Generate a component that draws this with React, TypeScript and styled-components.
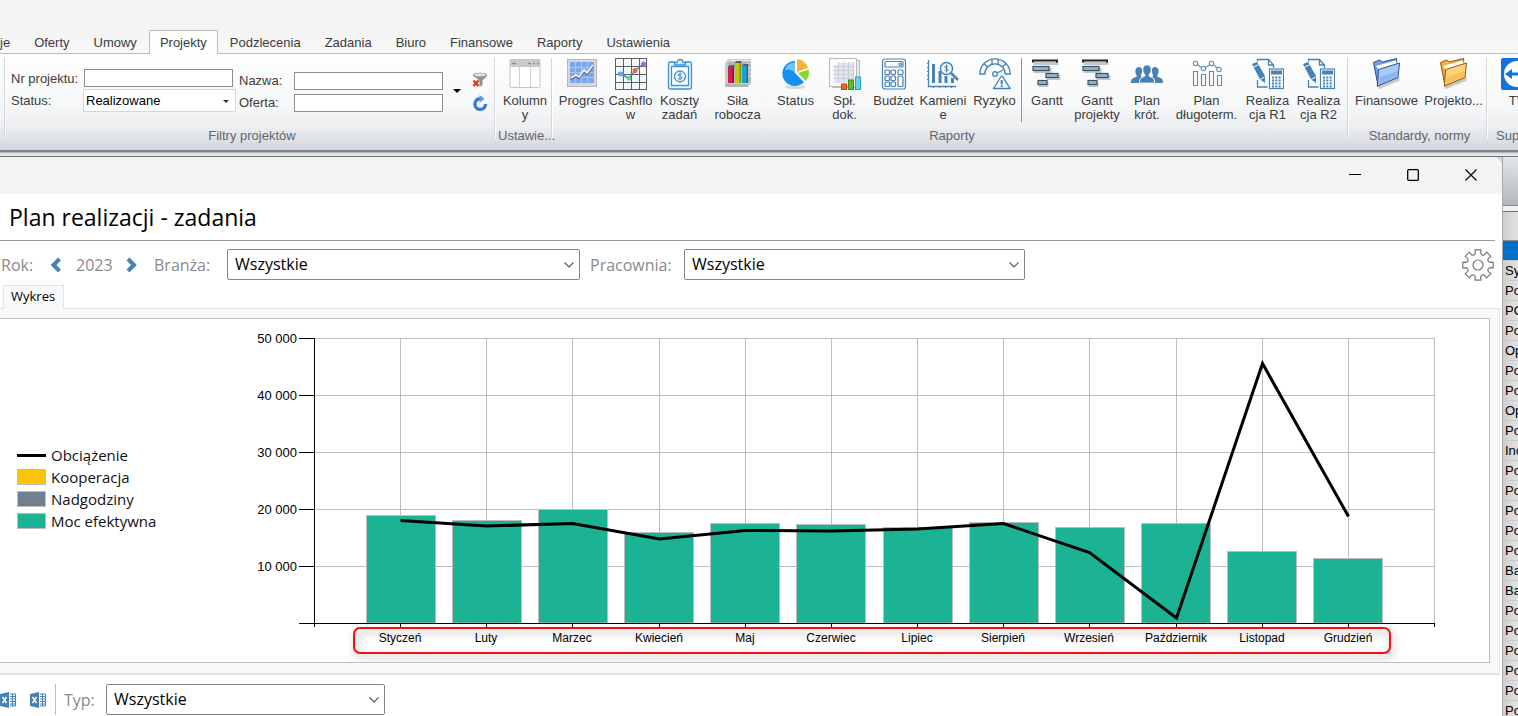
import React from "react";
import styled, { createGlobalStyle } from "styled-components";

const UI = `"Liberation Sans", Arial, sans-serif`;
const HUMAN = `"Open Sans", "Noto Sans", sans-serif`;
const BLUE = "#4682b4";

const GlobalStyle = createGlobalStyle`
  *, *::before, *::after { box-sizing: border-box; }
  body { margin: 0; background: #f0f0f0; font-family: ${UI}; font-size: 13px; color: #3c3c3c; }
  button, input, select { font: inherit; color: inherit; }
  button { padding: 0; border: 0; background: none; }
  svg { display: block; }
`;

const Shell = styled.div`
  display: flex;
  flex-direction: column;
  height: 100vh;
  overflow: hidden;
`;

/* ---------- ribbon ---------- */

const TabStrip = styled.nav`
  display: flex;
  flex: none;
  align-items: flex-end;
  height: 54px;
  background: linear-gradient(#f3f3f3, #f3f3f3 50%, #f9f9f9);
  box-shadow: inset 0 -1px #b9bbbe;
`;

const RibbonTab = styled.button<{ $active?: boolean; $cut?: boolean }>`
  height: 24px;
  padding: 0 ${(p) => (p.$active ? 10 : 11)}px;
  padding-left: ${(p) => (p.$cut ? 0 : p.$active ? 10 : 11)}px;
  white-space: nowrap;
  border: 1px solid ${(p) => (p.$active ? "#b9bbbe" : "transparent")};
  border-width: ${(p) => (p.$cut ? "1px 1px 0 0" : "1px 1px 0")};
  border-radius: 2px 2px 0 0;
  background: ${(p) => (p.$active ? "#fdfdfd" : "transparent")};
`;

const Ribbon = styled.div`
  display: flex;
  flex: none;
  height: 103px;
  padding: 4px 0 0 4px;
  border-bottom: 1px solid #747474;
  background:
    linear-gradient(#808388, #808388 2px, #b4b5b7 2px, #b4b5b7 3px, #dcdcdc 3px, #ececec) bottom / 100% 6px no-repeat,
    linear-gradient(#fefefe, #f6f7f8 50%, #eceef0 72%, #d2d6db 94%);
`;

const RibbonGroup = styled.section<{ $w: number }>`
  display: flex;
  flex: none;
  flex-direction: column;
  justify-content: space-between;
  width: ${(p) => p.$w}px;
  height: 85px;
  background:
    linear-gradient(#d3d6da, #d3d6da) left top / 1px 80px no-repeat,
    linear-gradient(#fff, #fff) 1px 0 / 1px 80px no-repeat;
`;

const GroupBody = styled.div<{ $pad?: number }>`
  display: flex;
  padding-left: ${(p) => p.$pad ?? 0}px;
`;

const GroupTitle = styled.div<{ $left?: number }>`
  padding-left: ${(p) => p.$left ?? 6}px;
  text-align: ${(p) => (p.$left ? "left" : "center")};
  line-height: 14px;
  white-space: nowrap;
  color: #5f6672;
`;

const ToolButton = styled.button<{ $w: number }>`
  display: flex;
  flex: none;
  flex-direction: column;
  align-items: center;
  gap: 4px;
  width: ${(p) => p.$w}px;
  line-height: 14px;
  white-space: pre;
  text-align: center;
`;

const ToolDivider = styled.span`
  flex: none;
  width: 1px;
  height: 64px;
  background: #8f9297;
`;

const FilterFields = styled.div`
  display: grid;
  grid-template-columns: 73px 155px 55px 149px;
  padding: 11px 0 0 7px;
`;

const FieldLabel = styled.label<{ $low?: boolean }>`
  height: 22px;
  padding-top: ${(p) => (p.$low ? 4 : 2)}px;
  line-height: 15px;
`;

const TextField = styled.input<{ $low?: boolean }>`
  width: 149px;
  height: 18px;
  margin-top: ${(p) => (p.$low ? 3 : 0)}px;
  padding: 0 2px;
  border: 1px solid #8b8d96;
  background: #fff;
`;

const StatusWrap = styled.span`
  position: relative;
  width: 153px;
  height: 23px;
  margin-left: -1px;
  margin-top: -2px;
  svg { position: absolute; right: 7px; top: 11px; pointer-events: none; }
`;

const StatusSelect = styled.select`
  appearance: none;
  width: 100%;
  height: 23px;
  padding: 0 2px 1px;
  border: 1px solid #d5d7da;
  border-radius: 0;
  background: #fff;
  color: #000;
`;

const SideTools = styled.div`
  display: flex;
  align-items: center;
  gap: 11px;
  padding: 11px 0 0 10px;
`;

const SideStack = styled.div`
  display: flex;
  flex-direction: column;
  gap: 7px;
`;

/* ---------- window ---------- */

const Desk = styled.div`
  display: grid;
  flex: 1;
  grid-template-columns: minmax(0, 1fr) 16px;
  min-height: 0;
  background: #d3d6da;
`;

const Window = styled.main`
  display: flex;
  flex-direction: column;
  min-width: 0;
  border-radius: 0 9px 0 0;
  background: #fff;
  overflow: hidden;
`;

const Caption = styled.header`
  display: flex;
  flex: none;
  justify-content: flex-end;
  height: 37px;
  padding-right: 2px;
  background: #f1f4f3;
`;

const CaptionButton = styled.button`
  display: grid;
  place-items: center;
  width: 58px;
  height: 36px;
`;

const Heading = styled.h1`
  flex: none;
  height: 47px;
  margin: 0 7px 0 0;
  padding-left: 9px;
  border-bottom: 1px solid #9b9b9b;
  font: 400 23px/46px ${HUMAN};
  color: #000;
`;

const Bar = styled.div`
  display: flex;
  flex: none;
  align-items: center;
  font: 400 16px/24px ${HUMAN};
  color: #8a8a8a;
`;

const CriteriaBar = styled(Bar)`
  height: 31px;
  margin: 8px 8px 0 0;
  padding-left: 1px;
`;

const BarText = styled.span<{ $w: number }>`
  flex: none;
  width: ${(p) => p.$w}px;
`;

const BarLabel = styled.label<{ $w: number }>`
  flex: none;
  width: ${(p) => p.$w}px;
`;

const IconButton = styled.button<{ $push?: boolean; $w?: number }>`
  display: flex;
  width: ${(p) => (p.$w ? `${p.$w}px` : "auto")};
  margin-left: ${(p) => (p.$push ? "auto" : 0)};
`;

const ComboWrap = styled.span<{ $w: number; $gap?: number }>`
  position: relative;
  flex: none;
  width: ${(p) => p.$w}px;
  margin-right: ${(p) => p.$gap ?? 0}px;
  svg { position: absolute; right: 6px; top: 13px; pointer-events: none; }
`;

const Combo = styled.select`
  appearance: none;
  display: block;
  width: 100%;
  height: 31px;
  padding: 0 24px 2px 7px;
  border: 1px solid #858585;
  border-radius: 2px;
  background: #fff;
  color: #000;
`;

const PageTabs = styled.div`
  display: flex;
  flex: none;
  height: 24px;
  margin: 5px 2px 0 0;
  padding-left: 3px;
  box-shadow: inset 0 -1px #e3e3e3;
`;

const PageTab = styled.button`
  height: 24px;
  padding: 0 8px 3px 7px;
  border: 1px solid #e3e3e3;
  border-bottom: 0;
  background: #f9f9f9;
  font: 400 13px/20px ${HUMAN};
  color: #000;
`;

const PagePanel = styled.section`
  flex: none;
  margin-right: 2px;
  padding: 9px 9px 10px 0;
  border: solid #e3e3e3;
  border-width: 0 1px 2px 0;
  background: #f9f9f9;
`;

const ChartBox = styled.div`
  display: flex;
  align-items: center;
  border: solid #bdbdbd;
  border-width: 1px 1px 1px 0;
  background: #fff;
`;

const Legend = styled.ul`
  flex: none;
  width: 240px;
  margin: 0;
  padding: 0 0 5px 17px;
  list-style: none;
  font: 400 15px/22px ${HUMAN};
  color: #111;
`;

const LegendItem = styled.li`
  display: flex;
  align-items: center;
  gap: 5px;
`;

const Swatch = styled.span<{ $color: string; $line?: boolean }>`
  width: 29px;
  height: ${(p) => (p.$line ? 3 : 16)}px;
  border: ${(p) => (p.$line ? "0" : "1px solid #bdbdbd")};
  background: ${(p) => p.$color};
`;

const ChartSvg = styled.svg`
  flex: 1;
  min-width: 0;
  font-family: ${UI};
`;

const ExportBar = styled(Bar)`
  height: 31px;
  margin-top: 9px;
`;

const BarDivider = styled.span`
  width: 1px;
  height: 31px;
  margin: 0 8px 0 9px;
  background: #bdbdbd;
`;

/* ---------- list behind the window ---------- */

const BackList = styled.aside`
  display: flex;
  flex-direction: column;
  border-left: 1px solid #a9a9a9;
  background: linear-gradient(90deg, #cfcfcf, #e2e2e2);
  color: #000;
  overflow: hidden;
`;

const BackToolbar = styled.div`
  flex: none;
  height: 49px;
  border-bottom: 1px solid #85888c;
  background: linear-gradient(#e3e5e8, #b3b7bd);
`;

const BackHeader = styled.div`
  flex: none;
  height: 35px;
  border-top: 5px solid #f2f2f2;
  border-bottom: 1px solid #8c8c8c;
  box-shadow: inset 0 1px #6f6f6f;
`;

const BackRow = styled.div<{ $selected?: boolean }>`
  flex: none;
  height: 20px;
  padding-left: 2px;
  border-bottom: 1px solid #cacaca;
  background: ${(p) => (p.$selected ? "#0070c9" : "none")};
  line-height: 20px;
  white-space: nowrap;
`;

/* ---------- icons ---------- */

const Ico = ({ children, size = 32 }: { children: React.ReactNode; size?: number }) => (
  <svg width={size} height={size} viewBox={`0 0 ${size} ${size}`} fill="none" aria-hidden="true">
    {children}
  </svg>
);

const ColumnsIcon = () => (
  <Ico>
    <rect x="1" y="1.500" width="30" height="28" rx="1" fill="#fff" stroke="#c3c5c8" />
    <rect x="1" y="2" width="30" height="7" fill="#c9cacc" />
    <path d="M3 5.500h4M19 5.500h3M24 5.500h2M28 5.500h2" stroke="#8d8f92" strokeWidth="1.500" />
    <path d="M10.500 9v20M21.500 9v20" stroke="#cfd1d4" />
  </Ico>
);

const ProgressIcon = () => (
  <Ico>
    <rect x="1.500" y="1.500" width="29" height="27" fill="#d5d7d9" stroke="#b5b7ba" />
    <rect x="4" y="4" width="24" height="21" fill="#7ea7ea" />
    <path d="M4 9.500h24M4 14.500h24M4 19.500h24M9.500 4v21M15.500 4v21M21.500 4v21" stroke="#a9c6f3" />
    <path d="M5 21l5-3 3 2 5-7 3 3 6-8" stroke="#4c5d7a" strokeWidth="2.200" />
    <path d="M5 20l5-3 3 2 5-7 3 3 6-8" stroke="#f1f1ee" strokeWidth="1.800" />
  </Ico>
);

const CashflowIcon = () => (
  <Ico>
    <rect width="32" height="32" fill="#f2f7fb" />
    <path d="M.5 0v32M8.500 0v32M16.500 0v32M24.500 0v32M31.500 0v32M0 .5h32M0 8.500h32M0 16.500h32M0 24.500h32M0 31.500h32" stroke="#5b5f63" />
    <path d="M3 15l3 1 8 4.500 6-8 9-7" stroke="#3f86c8" strokeWidth="1.500" />
    <circle cx="6" cy="16" r="2.500" fill="#6ea3e6" />
    <circle cx="14" cy="20.500" r="2.300" fill="#6fd07a" />
    <circle cx="20" cy="12.500" r="2.500" fill="#f0643c" />
    <circle cx="28.500" cy="6" r="2.500" fill="#b55fd0" />
  </Ico>
);

const ClipboardIcon = () => (
  <Ico>
    <g stroke="#3f93cf" strokeWidth="1.300">
      <path d="M11 4H6a1.500 1.500 0 0 0-1.500 1.500v24A1.500 1.500 0 0 0 6 31h20a1.500 1.500 0 0 0 1.500-1.500v-24A1.500 1.500 0 0 0 26 4h-5" fill="#eaf5fc" />
      <path d="M7.500 8.500h17v19h-17z" fill="#fff" />
      <path d="M10.500 7V4.500H13a3 3 0 0 1 6 0h2.500V7z" fill="#d7ecf9" />
      <circle cx="16" cy="18.500" r="5.500" fill="#eaf5fc" />
      <path d="M18 16.500c-.5-1-3.800-1.200-3.800.4 0 1.800 3.800.9 3.800 2.900 0 1.700-3.500 1.500-4 .2M16 14.500v8" strokeWidth="1" />
    </g>
  </Ico>
);

const BooksIcon = () => (
  <Ico>
    <path d="M3 5l3-4h23v24l-3 4H3z" fill="#c9cbcd" />
    <path d="M6 4h23v20H8z" fill="#b1b4b7" />
    <path d="M8 2.500h21M24 6h5M24 10h5M24 14h5M24 18h5" stroke="#e6e7e8" />
    <rect x="6" y="9" width="6" height="16" fill="#d31f49" />
    <rect x="13" y="5" width="6" height="20" fill="#c3c80d" />
    <rect x="20" y="8" width="6" height="17" fill="#16a2d4" />
    <path d="M5.500 9l2-2h5v2zM12.500 5l2-2h5v2zM19.500 8l2-2h5.500l-1 2z" fill="#5c5f63" />
    <path d="M10.500 9h1.500v16h-1.500z" fill="#93102f" />
    <path d="M17.500 5H19v20h-1.500z" fill="#8b9006" />
    <path d="M24.500 8H26v17h-1.500z" fill="#0d6f95" />
    <path d="M3 26h24l-2 3H3z" fill="#b3b5b8" />
  </Ico>
);

const PieIcon = () => (
  <Ico>
    <ellipse cx="15" cy="29" rx="10" ry="2" fill="#d6d9dc" />
    <path d="M15 3a12.500 12.500 0 1 0 9 21L15 15z" fill="#1590ec" />
    <path d="M15 4.500A10 10 0 0 0 5 12c5-1 8 0 10 3z" fill="#71c4fa" />
    <path d="M17 1a12 12 0 0 1 11 9l-11 4z" fill="#f7b538" />
    <path d="M18 15l10.500-3.500A12 12 0 0 1 25.500 23z" fill="#8bd62c" />
  </Ico>
);

const SheetIcon = () => (
  <Ico>
    <path d="M3.500 2.500h27v27h-27z" fill="#e9eaec" stroke="#b6b8bb" />
    <path d="M.5.5h27v28H.5z" fill="#fafafb" stroke="#b6b8bb" />
    <path d="M5 7h5v18H5zM10 5h14v20H10z" fill="#e2e5ef" />
    <path d="M4.500 8.500h20M4.500 12.500h20M4.500 16.500h20M4.500 20.500h20M9.500 4v21M14.500 4v21M19.500 4v21M24.500 4v21" stroke="#c9cedb" />
    <rect x="12.500" y="26" width="5" height="5.500" fill="#f26522" stroke="#c8430e" />
    <rect x="19.500" y="22" width="5" height="9.500" fill="#63b832" stroke="#3c8a18" />
    <rect x="26.500" y="19" width="5" height="12.500" fill="#5fd3e8" stroke="#25a7c0" />
  </Ico>
);

const CalculatorIcon = () => (
  <Ico>
    <g stroke={BLUE} strokeWidth="1.200">
      <rect x="4.500" y="1" width="23" height="30" rx="2.500" />
      <rect x="7" y="3.500" width="18" height="5.500" rx="1" />
      <rect x="21" y="5" width="2.500" height="2.500" rx="1" />
      {[12, 18, 24].map((y) =>
        [7, 13].map((x) => <rect key={`${x}-${y}`} x={x} y={y} width="4.500" height="4.500" rx="1" />)
      )}
      <rect x="20" y="12" width="5" height="4.500" rx="1" />
      <rect x="20" y="18" width="5" height="10.500" rx="1" />
    </g>
  </Ico>
);

const MilestoneIcon = () => (
  <Ico>
    <path d="M1.500 2v26.500H29" stroke={BLUE} strokeWidth="1.300" />
    <path d="M0 5.500h2M0 9.500h2M0 13.500h2M0 17.500h2M0 21.500h2M6.500 28v2M12.500 28v2M18.500 28v2M24.500 28v2" stroke={BLUE} />
    <path d="M6.500 6v19M13 13v12M19 18v7M25.500 20v5" stroke={BLUE} strokeWidth="3" />
    <circle cx="19.500" cy="10.500" r="6" fill="#f8fbfd" stroke={BLUE} strokeWidth="1.500" />
    <path d="M24 15l7 7" stroke={BLUE} strokeWidth="2.500" />
    <path d="M21.300 8.500c-.6-1-3.500-1-3.500.5 0 1.600 3.500.9 3.500 2.700 0 1.500-3.100 1.300-3.700.3M19.500 6.500v8" stroke={BLUE} />
  </Ico>
);

const RiskIcon = () => (
  <Ico>
    <g stroke={BLUE} strokeWidth="1.300">
      <path d="M.8 16a15.200 15.200 0 0 1 30.400 0h-5a10.200 10.200 0 0 0-20.400 0z" />
      <path d="M5 5.500l3.800 3.700M13 1.500v5M19 1.500v5M27 5.500l-3.800 3.700" />
      <circle cx="16" cy="16" r="2.300" />
      <path d="M18 15l6-3" />
      <path d="M22 18.500l-7.500 12h16.500l-7.500-12a1 1 0 0 0-1.500 0z" fill="#f8fbfd" />
      <path d="M22.700 22v4.500M22.700 27.500v1.500" strokeWidth="2" />
    </g>
  </Ico>
);

const GanttIcon = () => (
  <Ico>
    <g transform="translate(1.500 2)" fill="#c3c6ca">
      <path d="M1 2h25v3H1zM1 8h18v5H1zM14 15h14v5H14zM6 22h10v5H6z" />
    </g>
    <path d="M2 4.500V2.500h24V4.500" stroke="#222" strokeWidth="2" />
    <g fill="#8db8d2" stroke="#3d525f" strokeWidth="1.200">
      <rect x="2" y="8.500" width="16" height="4" />
      <rect x="15" y="15.500" width="12" height="4" />
      <rect x="7" y="22.500" width="9" height="4" />
    </g>
  </Ico>
);

const PeopleIcon = () => (
  <Ico>
    <g fill={BLUE}>
      <path d="M0 25c0-4 1-4.500 5-6 1.200-.5 1-1.500.3-2.300C4 15 3.600 9 7.800 9c3.500 0 3.800 3.500 3 6-.8 2-1.200 3-.2 4C8.500 20.500 8 22 8 25z" />
      <path d="M32 25c0-4-1-4.500-5-6-1.200-.5-1-1.500-.3-2.300C28 15 28.400 9 24.200 9c-3.500 0-3.800 3.500-3 6 .8 2 1.200 3 .2 4 2.100 1.500 2.600 3 2.600 6z" />
      <path d="M8.500 25c0-4.500 1-5 4.700-6.400 1-.4 1-1.600.2-2.600C11 13 11 7 16 7s5 6 2.600 9c-.8 1-.8 2.200.2 2.600 3.700 1.400 4.700 1.900 4.700 6.400z" stroke="#f8f9fa" strokeWidth=".8" />
    </g>
  </Ico>
);

const BarsTrendIcon = () => (
  <Ico>
    <g stroke="#5d8fba" strokeWidth="1.100">
      <path d="M2.500 13.500h4v14h-4zM10.500 16.500h4v11h-4zM18.500 13.500h4v14h-4zM26.500 17.500h4v10h-4z" />
      <circle cx="4.500" cy="5.500" r="2.200" />
      <circle cx="12.500" cy="10.500" r="2.200" />
      <circle cx="20.500" cy="5.500" r="2.200" />
      <circle cx="28" cy="11.500" r="2.200" />
      <path d="M6.500 7l4 2.500M14.500 9.500l4-2.500M22.500 7l4 3" />
    </g>
  </Ico>
);

const EstimateIcon = () => (
  <Ico>
    <path d="M5.500 3.500V1.500h11l5 5.500v3M16.500 1.500V7h5M5.500 22v7h10" stroke={BLUE} strokeWidth="1.300" />
    <path d="M0 6l5-2 8 14v7l-5-3.500z" fill={BLUE} />
    <path d="M1.500 9l5-2.200M8 21.500l4.500-2.500" stroke="#fff" />
    <rect x="17.500" y="11" width="14" height="19.500" fill="#fff" stroke={BLUE} strokeWidth="1.200" />
    <rect x="19" y="12.500" width="11" height="4" fill={BLUE} />
    <path d="M20 19.500h10M20 22.500h10M20 25.500h10M20 28.500h10" stroke={BLUE} strokeWidth="2" strokeDasharray="2 1.300" />
  </Ico>
);

const FolderIcon = ({ light, main, dark }: { light: string; main: string; dark: string }) => (
  <Ico>
    <path d="M5 28l24-9-1 4L8 31z" fill="#c6c8cb" />
    <path d="M2.500 4.500l6-2.500 3 2 14-3.500 1 17L7 27.500z" fill={main} stroke={dark} />
    <path d="M5 8L25 2.500l1 4.500L8 12z" fill="#fff" />
    <path d="M6.500 28l1-16.500L28.500 5l-1.500 14.500z" fill={light} stroke={dark} />
    <path d="M8 26l1-7 18-6-.8 6z" fill={main} opacity=".5" />
  </Ico>
);

const RemoteIcon = () => (
  <Ico>
    <rect width="32" height="32" rx="2" fill="#0f74dc" />
    <circle cx="16" cy="16" r="13" fill="#fff" />
    <path d="M4 16l7-5v3.500h10V11l7 5-7 5v-3.500H11V21z" fill="#0f74dc" />
  </Ico>
);

const ClearFilterIcon = () => (
  <Ico size={16}>
    <path d="M1 3c0-3 14-3 14 0 0 2-4 4-4.500 6v4l-3 2V9C7 7 1 5 1 3z" fill="#8f9193" />
    <ellipse cx="8" cy="2.800" rx="5.500" ry="1.500" fill="#e5e5e5" />
    <path d="M1.500 8.500l5 5.500M6.500 8.500l-5 5.500" stroke="#e03c12" strokeWidth="2.400" />
  </Ico>
);

const RefreshIcon = () => (
  <Ico size={16}>
    <path d="M13.500 9A5.300 5.300 0 1 1 8 3.800" stroke="#3a7bd0" strokeWidth="3.400" />
    <path d="M7.500 0l5 3.800-5 4z" fill="#5b97e0" />
  </Ico>
);

const ChevronIcon = ({ flip }: { flip?: boolean }) => (
  <svg width="12" height="16" viewBox="0 0 12 16" fill="none" aria-hidden="true">
    <path d={flip ? "M2 2l6 6-6 6" : "M9.500 2l-6 6 6 6"} stroke={BLUE} strokeWidth="4" />
  </svg>
);

const DownIcon = () => (
  <svg width="10" height="6" viewBox="0 0 10 6" fill="none" aria-hidden="true">
    <path d="M.5.5L5 5 9.500.5" stroke="#555" strokeWidth="1.100" />
  </svg>
);

const SmallArrow = ({ w, color }: { w: number; color: string }) => (
  <svg width={w} height={w / 2} viewBox="0 0 8 4" aria-hidden="true">
    <path d="M0 0h8L4 4z" fill={color} />
  </svg>
);

const teeth = 8;
const gearPath = (() => {
  const point = (r: number, deg: number) => {
    const a = (deg * Math.PI) / 180;
    return `${(16 + r * Math.sin(a)).toFixed(2)} ${(16 - r * Math.cos(a)).toFixed(2)}`;
  };
  let d = "";
  for (let i = 0; i < teeth; i++) {
    const c = (i * 360) / teeth;
    d += `${i ? "L" : "M"}${point(12, c - 13)}L${point(15.5, c - 11)}L${point(15.5, c + 11)}L${point(12, c + 13)}`;
    d += `Q${point(10, c + 22.5)} ${point(12, c + 32)}`;
  }
  return `${d}Z`;
})();

const GearIcon = () => (
  <Ico>
    <path d={gearPath} stroke="#777" strokeLinejoin="round" strokeWidth="1.200" />
    <circle cx="16" cy="16" r="5" stroke="#777" strokeWidth="1.200" />
  </Ico>
);

const ExcelIcon = () => (
  <Ico size={16}>
    <path d="M0 2l9-2v16l-9-2z" fill={BLUE} />
    <path d="M10 2h5.500v12H10M10 4.500h5M10 7h5M10 9.500h5M10 12h5M12.500 2v12" stroke={BLUE} />
    <path d="M2.500 5l4 6M6.500 5l-4 6" stroke="#fff" strokeWidth="1.500" />
  </Ico>
);

/* ---------- data ---------- */

type Tool = { label: string; w: number; icon: React.ReactNode };

const tabs = ["Oferty", "Umowy", "Projekty", "Podzlecenia", "Zadania", "Biuro", "Finansowe", "Raporty", "Ustawienia"];

const reports: Tool[] = [
  { label: "Progres", w: 49, icon: <ProgressIcon /> },
  { label: "Cashflo\nw", w: 49, icon: <CashflowIcon /> },
  { label: "Koszty\nzadań", w: 49, icon: <ClipboardIcon /> },
  { label: "Siła\nrobocza", w: 67, icon: <BooksIcon /> },
  { label: "Status", w: 49, icon: <PieIcon /> },
  { label: "Spł.\ndok.", w: 49, icon: <SheetIcon /> },
  { label: "Budżet", w: 49, icon: <CalculatorIcon /> },
  { label: "Kamieni\ne", w: 50, icon: <MilestoneIcon /> },
  { label: "Ryzyko", w: 53, icon: <RiskIcon /> },
];

const plans: Tool[] = [
  { label: "Gantt", w: 50, icon: <GanttIcon /> },
  { label: "Gantt\nprojekty", w: 50, icon: <GanttIcon /> },
  { label: "Plan\nkrót.", w: 50, icon: <PeopleIcon /> },
  { label: "Plan\ndługoterm.", w: 69, icon: <BarsTrendIcon /> },
  { label: "Realiza\ncja R1", w: 53, icon: <EstimateIcon /> },
  { label: "Realiza\ncja R2", w: 49, icon: <EstimateIcon /> },
];

const standards: Tool[] = [
  { label: "Finansowe", w: 67, icon: <FolderIcon light="#a9cbf8" main="#6da2ee" dark="#2e4f86" /> },
  { label: "Projekto...", w: 67, icon: <FolderIcon light="#ffd27a" main="#f9ae33" dark="#8a5a14" /> },
];

const legend = [
  { name: "Obciążenie", color: "#000", line: true },
  { name: "Kooperacja", color: "#fbc408" },
  { name: "Nadgodziny", color: "#708090" },
  { name: "Moc efektywna", color: "#1bb394" },
];

const months = [
  { name: "Styczeń", power: 18860, load: 18070 },
  { name: "Luty", power: 17980, load: 17100 },
  { name: "Marzec", power: 19910, load: 17540 },
  { name: "Kwiecień", power: 15880, load: 14820 },
  { name: "Maj", power: 17450, load: 16320 },
  { name: "Czerwiec", power: 17280, load: 16230 },
  { name: "Lipiec", power: 16840, load: 16580 },
  { name: "Sierpień", power: 17630, load: 17540 },
  { name: "Wrzesień", power: 16750, load: 12460 },
  { name: "Październik", power: 17450, load: 965 },
  { name: "Listopad", power: 12540, load: 45610 },
  { name: "Grudzień", power: 11320, load: 18770 },
];

const backRows = "Sy,Po,PO,Po,Op,Po,Po,Op,Po,Inc,Po,Po,Po,Po,Po,Ba,Ba,Po,Po,Po,Po,Po,Po".split(",");

/* ---------- chart ---------- */

const plot = { left: 74, top: 19, width: 1120, height: 285, max: 50000 };
const bottom = plot.top + plot.height;
const right = plot.left + plot.width;
const yOf = (v: number) => bottom - (v / plot.max) * plot.height;
const xOf = (i: number) => plot.left + ((i + 1) * plot.width) / (months.length + 1);
const snap = (n: number) => Math.floor(n) + 0.5;
const center = (i: number) => Math.round(xOf(i)) + 0.5;

const Chart = () => (
  <ChartSvg viewBox="0 0 1249 343" role="img" aria-label="Plan realizacji">
    <defs>
      <filter id="soft" x="-5%" y="-50%" width="110%" height="220%">
        <feDropShadow dx="2" dy="4" stdDeviation="4" floodOpacity=".4" />
      </filter>
    </defs>
    <g stroke="#bdbdbd">
      {[10000, 20000, 30000, 40000, 50000].map((v) => (
        <path key={v} d={`M${plot.left} ${snap(yOf(v))}H${right}`} />
      ))}
      {months.map((m, i) => (
        <path key={m.name} d={`M${center(i)} ${plot.top}V${bottom}`} />
      ))}
      <path d={`M${right + 0.5} ${plot.top}V${bottom}`} />
    </g>
    {months.map((m, i) => (
      <rect key={m.name} x={snap(xOf(i)) - 34} y={snap(yOf(m.power))} width="69" height={bottom - snap(yOf(m.power))} fill="#1bb394" stroke="#bdbdbd" />
    ))}
    <rect x="114" y="309" width="1036" height="25" rx="6" stroke="#fa0a0a" strokeWidth="2" fill="none" filter="url(#soft)" />
    <g stroke="#000">
      <path d={`M${plot.left + 0.5} ${plot.top}V${bottom + 4}M${plot.left - 15} ${bottom + 0.5}H${right + 1}M${right + 0.5} ${bottom}v4`} />
      {[10000, 20000, 30000, 40000, 50000].map((v) => (
        <path key={v} d={`M${plot.left - 15} ${snap(yOf(v))}h15`} />
      ))}
      {months.map((m, i) => (
        <path key={m.name} d={`M${center(i)} ${bottom}v4`} />
      ))}
    </g>
    <polyline points={months.map((m, i) => `${center(i)},${(yOf(m.load) + 0.5).toFixed(1)}`).join(" ")} fill="none" stroke="#000" strokeWidth="3" />
    <g fontSize="13" textAnchor="end" fill="#000">
      {[10, 20, 30, 40, 50].map((k) => (
        <text key={k} x={plot.left - 17} y={Math.floor(yOf(k * 1000)) + 5}>{`${k} 000`}</text>
      ))}
    </g>
    <g fontSize="12" textAnchor="middle" fill="#000">
      {months.map((m, i) => (
        <text key={m.name} x={center(i) - 0.5} y={bottom + 19}>{m.name}</text>
      ))}
    </g>
  </ChartSvg>
);

const Tools = ({ items }: { items: Tool[] }) => (
  <>
    {items.map((t) => (
      <ToolButton key={t.label} $w={t.w}>
        {t.icon}
        <span>{t.label}</span>
      </ToolButton>
    ))}
  </>
);

const ComboBox = ({ id, w, gap }: { id: string; w: number; gap?: number }) => (
  <ComboWrap $w={w} $gap={gap}>
    <Combo id={id}>
      <option>Wszystkie</option>
    </Combo>
    <DownIcon />
  </ComboWrap>
);

export default function App() {
  return (
    <Shell>
      <GlobalStyle />
      <TabStrip>
        <RibbonTab $cut>je</RibbonTab>
        {tabs.map((t) => (
          <RibbonTab key={t} $active={t === "Projekty"}>{t}</RibbonTab>
        ))}
      </TabStrip>

      <Ribbon>
        <RibbonGroup $w={490}>
          <GroupBody>
            <FilterFields>
              <FieldLabel htmlFor="number">Nr projektu:</FieldLabel>
              <TextField id="number" />
              <FieldLabel htmlFor="name" $low>Nazwa:</FieldLabel>
              <TextField id="name" $low />
              <FieldLabel htmlFor="status">Status:</FieldLabel>
              <StatusWrap>
                <StatusSelect id="status">
                  <option>Realizowane</option>
                </StatusSelect>
                <SmallArrow w={6} color="#333" />
              </StatusWrap>
              <FieldLabel htmlFor="offer" $low>Oferta:</FieldLabel>
              <TextField id="offer" $low />
            </FilterFields>
            <SideTools>
              <IconButton aria-label="Więcej"><SmallArrow w={8} color="#000" /></IconButton>
              <SideStack>
                <IconButton aria-label="Wyczyść filtr"><ClearFilterIcon /></IconButton>
                <IconButton aria-label="Odśwież"><RefreshIcon /></IconButton>
              </SideStack>
            </SideTools>
          </GroupBody>
          <GroupTitle>Filtry projektów</GroupTitle>
        </RibbonGroup>
        <RibbonGroup $w={57}>
          <GroupBody $pad={6}>
            <Tools items={[{ label: "Kolumn\ny", w: 50, icon: <ColumnsIcon /> }]} />
          </GroupBody>
          <GroupTitle $left={4}>Ustawie...</GroupTitle>
        </RibbonGroup>
        <RibbonGroup $w={796}>
          <GroupBody $pad={6}>
            <Tools items={reports} />
            <ToolDivider />
            <Tools items={plans} />
          </GroupBody>
          <GroupTitle>Raporty</GroupTitle>
        </RibbonGroup>
        <RibbonGroup $w={139}>
          <GroupBody $pad={6}>
            <Tools items={standards} />
          </GroupBody>
          <GroupTitle>Standardy, normy</GroupTitle>
        </RibbonGroup>
        <RibbonGroup $w={70}>
          <GroupBody $pad={6}>
            <Tools items={[{ label: "TV", w: 50, icon: <RemoteIcon /> }]} />
          </GroupBody>
          <GroupTitle $left={10}>Support</GroupTitle>
        </RibbonGroup>
      </Ribbon>

      <Desk>
        <Window>
          <Caption>
            <CaptionButton aria-label="Minimalizuj">
              <Ico size={12}><path d="M0 5.500h12" stroke="#000" /></Ico>
            </CaptionButton>
            <CaptionButton aria-label="Maksymalizuj">
              <Ico size={12}><rect x=".7" y=".7" width="10.600" height="10.600" rx="1" stroke="#000" strokeWidth="1.300" /></Ico>
            </CaptionButton>
            <CaptionButton aria-label="Zamknij">
              <Ico size={12}><path d="M.5.5l11 11M11.500.5l-11 11" stroke="#000" strokeWidth="1.200" /></Ico>
            </CaptionButton>
          </Caption>
          <Heading>Plan realizacji - zadania</Heading>

          <CriteriaBar>
            <BarText $w={49}>Rok:</BarText>
            <IconButton aria-label="Poprzedni rok" $w={26}><ChevronIcon /></IconButton>
            <BarText $w={50}>2023</BarText>
            <IconButton aria-label="Następny rok" $w={28}><ChevronIcon flip /></IconButton>
            <BarLabel htmlFor="branch" $w={73}>Branża:</BarLabel>
            <ComboBox id="branch" w={353} gap={10} />
            <BarLabel htmlFor="studio" $w={94}>Pracownia:</BarLabel>
            <ComboBox id="studio" w={341} />
            <IconButton aria-label="Ustawienia" $push><GearIcon /></IconButton>
          </CriteriaBar>

          <PageTabs>
            <PageTab>Wykres</PageTab>
          </PageTabs>
          <PagePanel>
            <ChartBox>
              <Legend>
                {legend.map((l) => (
                  <LegendItem key={l.name}>
                    <Swatch $color={l.color} $line={l.line} />
                    {l.name}
                  </LegendItem>
                ))}
              </Legend>
              <Chart />
            </ChartBox>
          </PagePanel>

          <ExportBar>
            <IconButton aria-label="Eksport zadań" $w={30}><ExcelIcon /></IconButton>
            <IconButton aria-label="Eksport planu"><ExcelIcon /></IconButton>
            <BarDivider />
            <BarLabel htmlFor="kind" $w={42}>Typ:</BarLabel>
            <ComboBox id="kind" w={279} />
          </ExportBar>
        </Window>

        <BackList>
          <BackToolbar />
          <BackHeader />
          <BackRow $selected />
          {backRows.map((r, i) => (
            <BackRow key={i}>{r}</BackRow>
          ))}
        </BackList>
      </Desk>
    </Shell>
  );
}
